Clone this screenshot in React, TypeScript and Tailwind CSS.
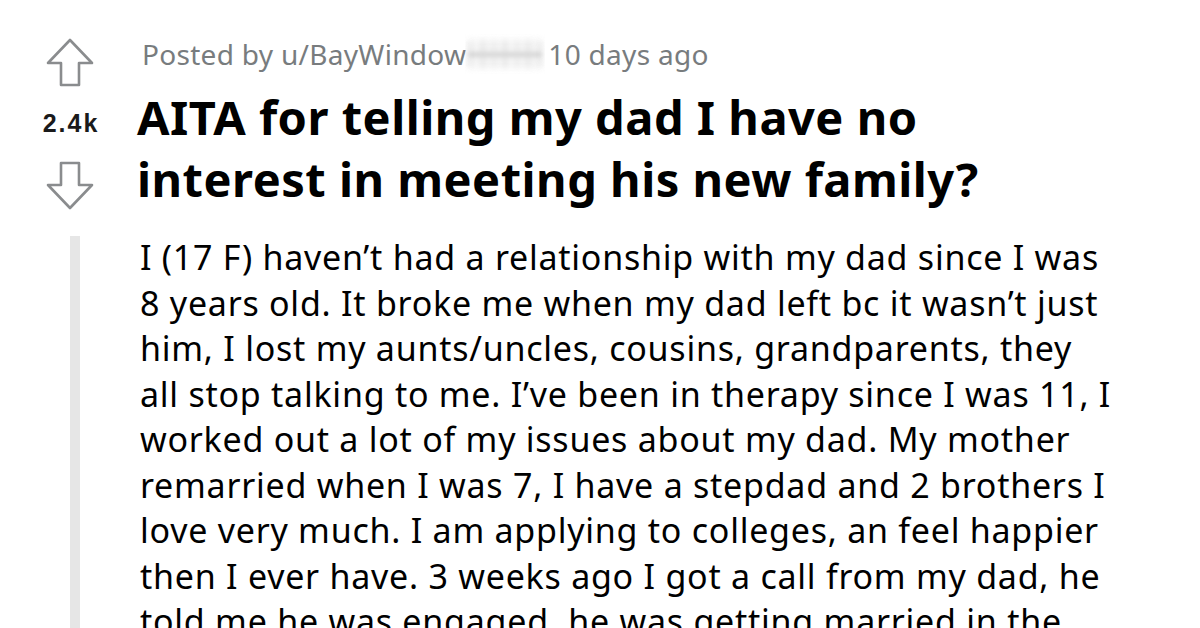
import React from "react";

function UpArrow() {
  return (
    <svg width="48" height="49" viewBox="0 0 48 49" fill="none">
      <path
        d="M24 2 L46 25 L33 25 L33 47 L15 47 L15 25 L2 25 Z"
        stroke="#8a8c8e"
        strokeWidth="2.6"
        strokeLinejoin="round"
      />
    </svg>
  );
}

function DownArrow() {
  return (
    <svg width="48" height="49" viewBox="0 0 48 49" fill="none">
      <path
        d="M24 47 L46 24 L33 24 L33 2 L15 2 L15 24 L2 24 Z"
        stroke="#8a8c8e"
        strokeWidth="2.6"
        strokeLinejoin="round"
      />
    </svg>
  );
}

const lines = [
  "I (17 F) haven\u2019t had a relationship with my dad since I was",
  "8 years old. It broke me when my dad left bc it wasn\u2019t just",
  "him, I lost my aunts/uncles, cousins, grandparents, they",
  "all stop talking to me. I\u2019ve been in therapy since I was 11, I",
  "worked out a lot of my issues about my dad. My mother",
  "remarried when I was 7, I have a stepdad and 2 brothers I",
  "love very much. I am applying to colleges, an feel happier",
  "then I ever have. 3 weeks ago I got a call from my dad, he",
  "told me he was engaged, he was getting married in the",
  "next few months and he wanted me to meet his new family.",
];

function BlurPatch() {
  return (
    <span className="relative w-[80px] h-[40px] ml-[-1px] mr-[3px] overflow-hidden shrink-0">
      <span className="absolute inset-x-[2px] inset-y-[4px] blur-[3px] flex items-center justify-between px-[2px]">
        <span className="w-[4px] h-[26px] bg-[#dcdcdc]" />
        <span className="w-[4px] h-[26px] bg-[#d4d4d4]" />
        <span className="w-[4px] h-[26px] bg-[#dcdcdc]" />
        <span className="w-[4px] h-[26px] bg-[#d2d2d2]" />
        <span className="w-[4px] h-[26px] bg-[#dcdcdc]" />
        <span className="w-[4px] h-[26px] bg-[#d4d4d4]" />
        <span className="w-[4px] h-[26px] bg-[#dddddd]" />
      </span>
      <span className="absolute left-[4px] right-[4px] top-[18px] h-[5px] bg-[#c8c8c8] blur-[2px]" />
      <span className="absolute inset-x-[4px] inset-y-[6px] bg-[#eeeeee] opacity-40 blur-[4px]" />
    </span>
  );
}

export default function App() {
  return (
    <div className="w-[1200px] h-[628px] overflow-hidden bg-white flex">
      <div className="w-[140px] shrink-0 flex flex-col items-center">
        <div className="mt-[38px]">
          <UpArrow />
        </div>
        <div
          className="mt-[23px] pl-[2px] text-[25px] leading-[26px] font-bold tracking-[2px] text-[#1a1a1b]"
          style={{ fontFamily: '"Liberation Sans", Arial, sans-serif' }}
        >
          2.4k
        </div>
        <div className="mt-[25px]">
          <DownArrow />
        </div>
        <div className="mt-[26px] ml-[10px] w-[10px] flex-1 bg-[#e6e6e6]" />
      </div>
      <div className="flex-1">
        <div
          className="mt-[34px] ml-[2px] flex items-center text-[28px] leading-[40px] tracking-[0.3px] text-[#787c7e]"
          style={{ fontFamily: '"Noto Sans", sans-serif' }}
        >
          <span>Posted by u/BayWindow</span>
          <BlurPatch />
          <span>10 days ago</span>
        </div>
        <h1
          className="mt-[12px] ml-[-3px] text-[47px] leading-[62px] font-bold tracking-[0.5px] text-black whitespace-nowrap"
          style={{ fontFamily: '"Noto Sans", sans-serif' }}
        >
          AITA for telling my dad I have no
          <br />
          interest in meeting his new family?
        </h1>
        <div
          className="mt-[25px] text-[34px] leading-[45.5px] tracking-[0.75px] text-black whitespace-nowrap"
          style={{ fontFamily: '"Noto Sans", sans-serif' }}
        >
          {lines.map((l, i) => (
            <div key={i}>{l}</div>
          ))}
        </div>
      </div>
    </div>
  );
}
